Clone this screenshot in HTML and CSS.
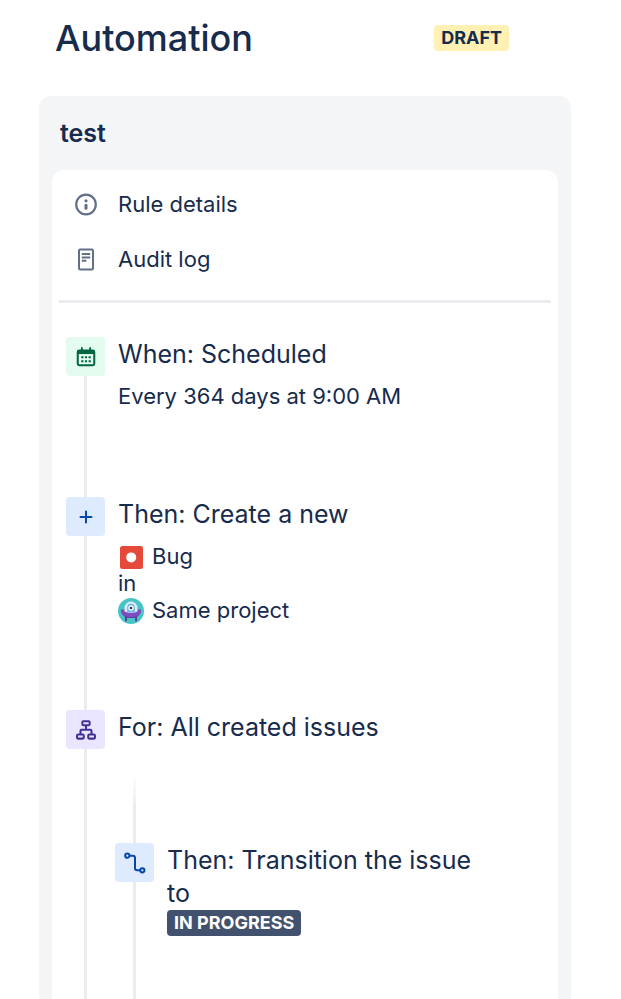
FILE: index.html
```html
<!DOCTYPE html>
<html lang="en">
<head>
  <meta charset="UTF-8" />
  <meta name="viewport" content="width=device-width, initial-scale=1.0"/>
  <title>Automation</title>
  <link rel="stylesheet" href="styles.css">
</head>

<body>

  <!-- Page title and rule state -->
  <header class="page-header">
    <h1>Automation</h1>
    <span class="lozenge lozenge-draft">DRAFT</span>
  </header>

  <main class="rule-panel">
    <h2 class="rule-name">test</h2>

    <div class="rule-card">
      <!-- Rule links -->
      <nav class="rule-links">
        <a href="#details">
          <svg class="link-icon" viewBox="0 0 24 24" fill="none" stroke="#626f86" stroke-width="2.2">
            <circle cx="12" cy="11.5" r="9.8"/>
            <circle cx="12" cy="7.8" r="1.6" fill="#626f86" stroke="none"/>
            <path d="M12 12.2v3" stroke-width="3" stroke-linecap="round"/>
          </svg>
          Rule details
        </a>
        <a href="#audit">
          <svg class="link-icon" viewBox="0 0 24 24" fill="none" stroke="#626f86" stroke-width="2">
            <rect x="5" y="1.5" width="14" height="20" rx="1.2"/>
            <path d="M7.8 6h8.4M7.8 9.400h8.400M7.800 12.800h4.600"/>
          </svg>
          Audit log
        </a>
      </nav>

      <!-- Rule steps -->
      <ol class="steps">
        <li class="step">
          <div class="rail">
            <span class="tile tile-green">
              <svg viewBox="0 0 24 24" fill="none" stroke="#006644">
                <path d="M7.5 2.2v4M16.5 2.2v4" stroke-width="2" stroke-linecap="round"/>
                <rect x="3" y="5" width="18" height="16" rx="1.6" stroke-width="2.2"/>
                <path d="M3 6.8h18" stroke-width="4"/>
                <path d="M6.8 12.2h2.4m1.6 0h2.4m1.6 0h2.4M6.8 16.6h2.4m1.6 0h2.4m1.6 0h2.4" stroke-width="2.2"/>
              </svg>
            </span>
            <span class="line"></span>
          </div>
          <div class="step-body">
            <h3>When: Scheduled</h3>
            <p>Every 364 days at 9:00 AM</p>
          </div>
        </li>

        <li class="step">
          <div class="rail">
            <span class="tile tile-blue">
              <svg viewBox="0 0 24 24" fill="none" stroke="#0747a6" stroke-width="2.2" stroke-linecap="round">
                <path d="M12 6v12M6 12h12"/>
              </svg>
            </span>
            <span class="line"></span>
          </div>
          <div class="step-body">
            <h3>Then: Create a new</h3>
            <p class="with-icon">
              <svg viewBox="0 0 26 26">
                <rect x="2" y="2" width="23" height="23" rx="2.5" fill="#e5493a"/>
                <circle cx="13.2" cy="13.4" r="5" fill="#fff"/>
              </svg>
              Bug
            </p>
            <p>in</p>
            <p class="with-icon">
              <svg viewBox="0 0 26 26">
                <circle cx="13" cy="13" r="13" fill="#47c5c4"/>
                <path d="M8 19v3.400M18 19v3.400" stroke="#5e3a9e" stroke-width="2" stroke-linecap="round"/>
                <path d="M3 11.500h20c1 4-3 8.600-10 8.600S2 15.500 3 11.500z" fill="#7f4bc4"/>
                <path d="M5 16.500c3 3.500 13 3.500 16 0-2 4.800-14 4.800-16 0z" fill="#5e3a9e"/>
                <path d="M6.500 13.500V10a6.500 6.500 0 0 1 13 0v3.500c-3 1.800-10 1.800-13 0z" fill="#deebff"/>
                <path d="M9.200 14.300V9.500a3.800 3.800 0 0 1 7.600 0v4.800z" fill="#67b5e6"/>
                <circle cx="13" cy="10" r="2.700" fill="#fff"/>
                <circle cx="13" cy="10" r="1.300" fill="#253858"/>
              </svg>
              Same project
            </p>
          </div>
        </li>

        <li class="step">
          <div class="rail">
            <span class="tile tile-purple">
              <svg viewBox="0 0 24 24" fill="none" stroke="#403294" stroke-width="2.2">
                <rect x="8" y="2.400" width="8" height="4.400" rx="1.200"/>
                <rect x="2.200" y="17" width="7.400" height="4.400" rx="1.200"/>
                <rect x="14.400" y="17" width="7.400" height="4.400" rx="1.200"/>
                <path d="M12 6.800v5M6 17v-4.200a1 1 0 0 1 1-1h10a1 1 0 0 1 1 1V17"/>
              </svg>
            </span>
            <span class="line"></span>
          </div>
          <div class="step-body">
            <h3>For: All created issues</h3>

            <!-- Branch steps -->
            <ol class="branch">
              <li class="branch-start"></li>
              <li class="step">
                <div class="rail">
                  <span class="tile tile-blue">
                    <svg viewBox="0 0 24 24" fill="none" stroke="#0747a6" stroke-width="2.2">
                      <circle cx="3.600" cy="4" r="2.300"/>
                      <circle cx="20" cy="20" r="2.300"/>
                      <path d="M6 4h3.500a2.500 2.500 0 0 1 2.500 2.500v11a2.500 2.500 0 0 0 2.500 2.500h3.200"/>
                    </svg>
                  </span>
                  <span class="line"></span>
                </div>
                <div class="step-body">
                  <h3>Then: Transition the issue to</h3>
                  <span class="lozenge lozenge-progress">IN PROGRESS</span>
                </div>
              </li>
            </ol>
          </div>
        </li>
      </ol>
    </div>
  </main>

</body>
</html>
```
FILE: styles.css
```css
* { box-sizing: border-box; }

body {
  margin: 0;
  min-height: 100vh;
  display: flex;
  flex-direction: column;
  padding: 0 50px 0 39px;
  font-family: Inter, "Liberation Sans", sans-serif;
  font-size: 22px;
  line-height: 27px;
  color: #172b4d;
  background: #fff;
}

h1, h2, h3, p, ol {
  margin: 0;
  padding: 0;
}

ol { list-style: none; }

/* Page header */
.page-header {
  display: flex;
  align-items: center;
  justify-content: space-between;
  height: 96px;
  padding: 0 62px 21px 16px;
}

h1 {
  font-size: 36px;
  font-weight: 500;
  line-height: 46px;
}

.lozenge {
  display: inline-block;
  padding: 0 7px;
  border-radius: 4px;
  font-size: 18px;
  font-weight: 700;
  line-height: 26px;
}

.lozenge-draft { background: #fff0b3; }

.lozenge-progress {
  background: #42526e;
  color: #fff;
}

/* Rule panel */
.rule-panel {
  flex: 1;
  display: flex;
  flex-direction: column;
  padding: 0 13px;
  border-radius: 12px 12px 0 0;
  background: #f4f5f7;
}

.rule-name {
  padding: 20px 8px;
  font-size: 25px;
  font-weight: 600;
  line-height: 34px;
}

.rule-card {
  flex: 1;
  display: flex;
  flex-direction: column;
  padding: 7px 7px 0;
  border-radius: 12px 12px 0 0;
  background: #fff;
}

.rule-links {
  padding-bottom: 13px;
  border-bottom: 3px solid #ebecf0;
}

.rule-links a {
  display: flex;
  align-items: center;
  gap: 20px;
  height: 55px;
  padding-left: 15px;
  color: inherit;
  text-decoration: none;
}

.link-icon {
  width: 24px;
  height: 24px;
}

/* Steps */
.steps {
  flex: 1;
  display: flex;
  flex-direction: column;
  padding: 34px 0 0 7px;
}

.steps > .step:last-child,
.branch > .step:last-child {
  flex: 1;
}

.step {
  display: flex;
  gap: 13px;
  min-height: 160px;
}

.rail {
  display: flex;
  flex-direction: column;
  align-items: center;
}

.tile {
  display: grid;
  place-items: center;
  width: 39px;
  height: 39px;
  border-radius: 4px;
}

.tile svg {
  width: 22px;
  height: 22px;
}

.tile-green { background: #e3fcef; }
.tile-blue { background: #deebff; }
.tile-purple { background: #eae6ff; }

.line {
  flex: 1;
  width: 3px;
  background: #ebecf0;
}

.step-body {
  flex: 1;
  display: flex;
  flex-direction: column;
  align-items: flex-start;
  padding: 1px 0 86px;
}

h3 {
  max-width: 320px;
  font-size: 25px;
  font-weight: 400;
  line-height: 33px;
}

h3 + p { margin-top: 12px; }

.with-icon {
  display: flex;
  align-items: center;
  gap: 8px;
}

.with-icon svg {
  width: 26px;
  height: 26px;
}

/* Nested branch, its line fades in above the first step */
.branch {
  flex: 1;
  display: flex;
  flex-direction: column;
  margin: 31px 0 0 -3px;
}

.branch-start {
  width: 3px;
  height: 68px;
  margin-left: 18px;
  background: linear-gradient(#fff, #ebecf0 50%);
}

.steps > .step:last-child > .step-body,
.branch .step-body {
  padding-bottom: 0;
}
```
